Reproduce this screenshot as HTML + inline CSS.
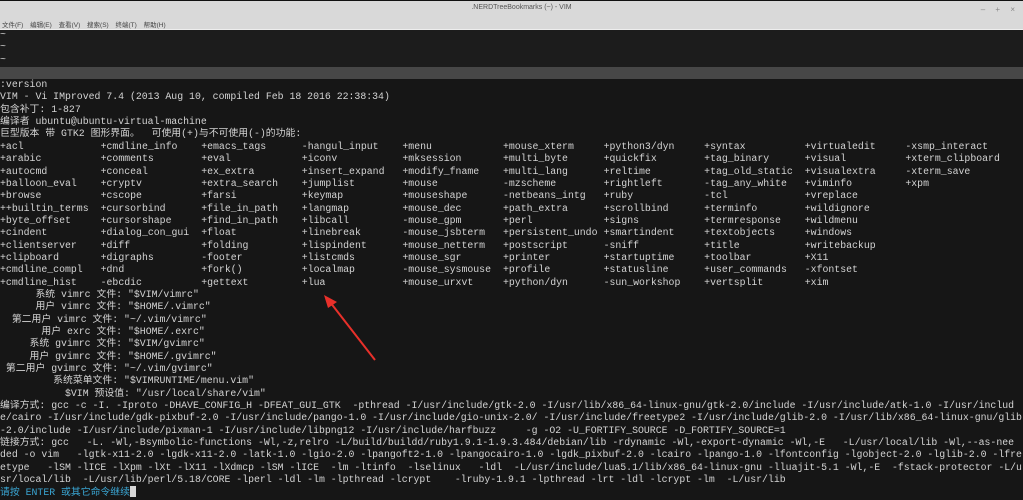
<!DOCTYPE html>
<html><head><meta charset="utf-8"><style>
*{margin:0;padding:0;box-sizing:border-box}
body{width:1023px;height:499px;overflow:hidden;background:#161616;position:relative;font-family:"Liberation Mono","Noto Sans CJK SC",monospace;color:#d4d4d4}
#top{position:absolute;left:0;top:0;width:1023px;height:30px;background:#d9d9d9;border-top:1px solid #111;border-bottom:1px solid #eee}
#title{position:absolute;top:3px;left:0;width:1023px;text-align:center;font:7px "Liberation Sans","Noto Sans CJK SC",sans-serif;color:#555;padding-left:20px}
#menu{position:absolute;top:18px;left:2px;font:6.5px "Liberation Sans","Noto Sans CJK SC",sans-serif;color:#444;word-spacing:5px}
#wb{position:absolute;top:4px;right:4px;font:8px "Liberation Sans",sans-serif;color:#888;letter-spacing:4px}
#up{position:absolute;top:30px;left:0;width:1023px;height:37px;background:#1c1c1c}
#band{position:absolute;top:67px;left:0;width:1023px;height:12px;background:#474747}
.t{position:absolute;left:0;font-size:9.85px;line-height:12.33px;white-space:pre;overflow:hidden;width:1023px}
#grid{position:absolute;left:0;top:141px;display:grid;grid-template-columns:repeat(10,100.6px);grid-template-rows:repeat(12,12.33px);grid-auto-flow:column;font-size:9.85px;line-height:12.33px;white-space:pre}
.c{color:#3aa6d4}
.cur{display:inline-block;width:6px;height:11px;background:#d8d8d8;vertical-align:-2px}
</style></head><body>
<div id="top"><div id="title">.NERDTreeBookmarks (~) - VIM</div><div id="menu">文件(F) 编辑(E) 查看(V) 搜索(S) 终端(T) 帮助(H)</div><div id="wb">– + ×</div></div>
<div id="up"></div><div id="band"></div>
<div class="t" style="top:29px">~
~
~</div>
<div class="t" style="top:79px">:version
VIM - Vi IMproved 7.4 (2013 Aug 10, compiled Feb 18 2016 22:38:34)
包含补丁: 1-827
编译者 ubuntu@ubuntu-virtual-machine
巨型版本 带 GTK2 图形界面。  可使用(+)与不可使用(-)的功能:</div>
<div id="grid">
<span>+acl</span><span>+arabic</span><span>+autocmd</span><span>+balloon_eval</span><span>+browse</span><span>++builtin_terms</span><span>+byte_offset</span><span>+cindent</span><span>+clientserver</span><span>+clipboard</span><span>+cmdline_compl</span><span>+cmdline_hist</span>
<span>+cmdline_info</span><span>+comments</span><span>+conceal</span><span>+cryptv</span><span>+cscope</span><span>+cursorbind</span><span>+cursorshape</span><span>+dialog_con_gui</span><span>+diff</span><span>+digraphs</span><span>+dnd</span><span>-ebcdic</span>
<span>+emacs_tags</span><span>+eval</span><span>+ex_extra</span><span>+extra_search</span><span>+farsi</span><span>+file_in_path</span><span>+find_in_path</span><span>+float</span><span>+folding</span><span>-footer</span><span>+fork()</span><span>+gettext</span>
<span>-hangul_input</span><span>+iconv</span><span>+insert_expand</span><span>+jumplist</span><span>+keymap</span><span>+langmap</span><span>+libcall</span><span>+linebreak</span><span>+lispindent</span><span>+listcmds</span><span>+localmap</span><span>+lua</span>
<span>+menu</span><span>+mksession</span><span>+modify_fname</span><span>+mouse</span><span>+mouseshape</span><span>+mouse_dec</span><span>-mouse_gpm</span><span>-mouse_jsbterm</span><span>+mouse_netterm</span><span>+mouse_sgr</span><span>-mouse_sysmouse</span><span>+mouse_urxvt</span>
<span>+mouse_xterm</span><span>+multi_byte</span><span>+multi_lang</span><span>-mzscheme</span><span>-netbeans_intg</span><span>+path_extra</span><span>+perl</span><span>+persistent_undo</span><span>+postscript</span><span>+printer</span><span>+profile</span><span>+python/dyn</span>
<span>+python3/dyn</span><span>+quickfix</span><span>+reltime</span><span>+rightleft</span><span>+ruby</span><span>+scrollbind</span><span>+signs</span><span>+smartindent</span><span>-sniff</span><span>+startuptime</span><span>+statusline</span><span>-sun_workshop</span>
<span>+syntax</span><span>+tag_binary</span><span>+tag_old_static</span><span>-tag_any_white</span><span>-tcl</span><span>+terminfo</span><span>+termresponse</span><span>+textobjects</span><span>+title</span><span>+toolbar</span><span>+user_commands</span><span>+vertsplit</span>
<span>+virtualedit</span><span>+visual</span><span>+visualextra</span><span>+viminfo</span><span>+vreplace</span><span>+wildignore</span><span>+wildmenu</span><span>+windows</span><span>+writebackup</span><span>+X11</span><span>-xfontset</span><span>+xim</span>
<span>-xsmp_interact</span><span>+xterm_clipboard</span><span>-xterm_save</span><span>+xpm</span>
</div>
<div class="t" style="top:289px">      系统 vimrc 文件: "$VIM/vimrc"
      用户 vimrc 文件: "$HOME/.vimrc"
  第二用户 vimrc 文件: "~/.vim/vimrc"
       用户 exrc 文件: "$HOME/.exrc"
     系统 gvimrc 文件: "$VIM/gvimrc"
     用户 gvimrc 文件: "$HOME/.gvimrc"
 第二用户 gvimrc 文件: "~/.vim/gvimrc"
         系统菜单文件: "$VIMRUNTIME/menu.vim"
           $VIM 预设值: "/usr/local/share/vim"
编译方式: gcc -c -I. -Iproto -DHAVE_CONFIG_H -DFEAT_GUI_GTK  -pthread -I/usr/include/gtk-2.0 -I/usr/lib/x86_64-linux-gnu/gtk-2.0/include -I/usr/include/atk-1.0 -I/usr/includ
e/cairo -I/usr/include/gdk-pixbuf-2.0 -I/usr/include/pango-1.0 -I/usr/include/gio-unix-2.0/ -I/usr/include/freetype2 -I/usr/include/glib-2.0 -I/usr/lib/x86_64-linux-gnu/glib
-2.0/include -I/usr/include/pixman-1 -I/usr/include/libpng12 -I/usr/include/harfbuzz     -g -O2 -U_FORTIFY_SOURCE -D_FORTIFY_SOURCE=1
链接方式: gcc   -L. -Wl,-Bsymbolic-functions -Wl,-z,relro -L/build/buildd/ruby1.9.1-1.9.3.484/debian/lib -rdynamic -Wl,-export-dynamic -Wl,-E   -L/usr/local/lib -Wl,--as-nee
ded -o vim   -lgtk-x11-2.0 -lgdk-x11-2.0 -latk-1.0 -lgio-2.0 -lpangoft2-1.0 -lpangocairo-1.0 -lgdk_pixbuf-2.0 -lcairo -lpango-1.0 -lfontconfig -lgobject-2.0 -lglib-2.0 -lfre
etype   -lSM -lICE -lXpm -lXt -lX11 -lXdmcp -lSM -lICE  -lm -ltinfo  -lselinux   -ldl  -L/usr/include/lua5.1/lib/x86_64-linux-gnu -lluajit-5.1 -Wl,-E  -fstack-protector -L/u
sr/local/lib  -L/usr/lib/perl/5.18/CORE -lperl -ldl -lm -lpthread -lcrypt    -lruby-1.9.1 -lpthread -lrt -ldl -lcrypt -lm  -L/usr/lib
<span class="c">请按 ENTER 或其它命令继续</span><span class="cur"></span></div>
<svg style="position:absolute;left:0;top:0" width="1023" height="499"><line x1="375" y1="360" x2="330" y2="302" stroke="#e8302a" stroke-width="2"/><polygon points="324,295 337,302 328,308" fill="#e8302a"/></svg>
</body></html>
